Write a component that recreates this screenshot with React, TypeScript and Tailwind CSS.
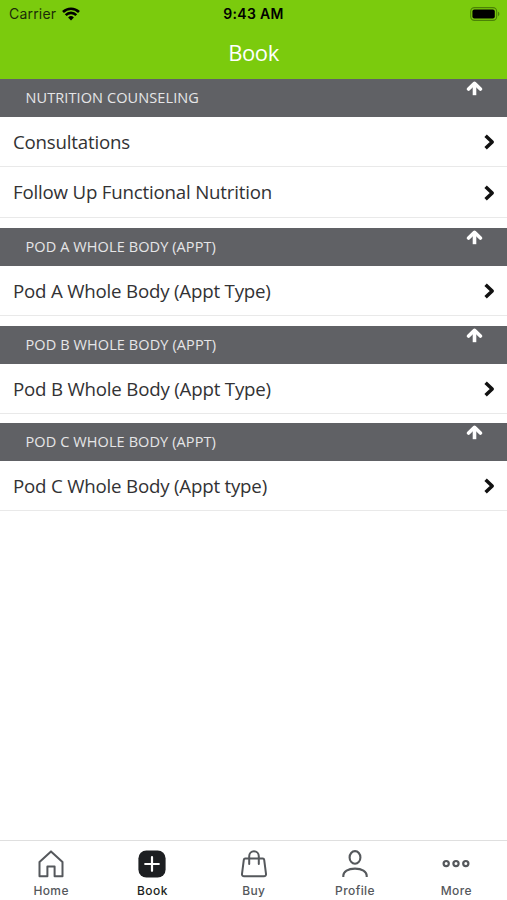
import React, { useState } from 'react';

interface Section {
  id: string;
  title: string;
  items: string[];
}

const SECTIONS: Section[] = [
  { id: 'nutrition', title: 'NUTRITION COUNSELING', items: ['Consultations', 'Follow Up Functional Nutrition'] },
  { id: 'pod-a', title: 'POD A WHOLE BODY (APPT)', items: ['Pod A Whole Body (Appt Type)'] },
  { id: 'pod-b', title: 'POD B WHOLE BODY (APPT)', items: ['Pod B Whole Body (Appt Type)'] },
  { id: 'pod-c', title: 'POD C WHOLE BODY (APPT)', items: ['Pod C Whole Body (Appt type)'] },
];

const HomeIcon = () => (
  <svg width="28" height="28" viewBox="0 0 28 28" fill="none" stroke="currentColor" strokeWidth="2" strokeLinejoin="round">
    <path d="M2.5 12 14 1.4 25.5 12v14.2H17.6v-9.6h-7.2v9.6H2.5z" />
  </svg>
);

const BookIcon = () => (
  <svg width="28" height="28" viewBox="0 0 28 28" fill="none">
    <rect x="0.4" y="0.4" width="27.2" height="27.2" rx="8" fill="#1d1f22" />
    <path d="M14 7.2v13.6M7.2 14h13.6" stroke="#fff" strokeWidth="2.2" strokeLinecap="round" />
  </svg>
);

const BuyIcon = () => (
  <svg width="28" height="28" viewBox="0 0 28 28" fill="none" stroke="currentColor" strokeWidth="2" strokeLinecap="round" strokeLinejoin="round">
    <path d="M5.2 8.6h17.6c.8 0 1.3.5 1.4 1.2l1.8 14c.2 1.4-.7 2.5-2.1 2.5H4.1c-1.4 0-2.3-1.1-2.1-2.5l1.8-14c.1-.7.6-1.2 1.4-1.2z" />
    <path d="M9.2 14V6.3a4.8 5 0 0 1 9.6 0V14" />
  </svg>
);

const ProfileIcon = () => (
  <svg width="28" height="28" viewBox="0 0 28 28" fill="none" stroke="currentColor" strokeWidth="2.1">
    <ellipse cx="14" cy="7.4" rx="5.4" ry="6.3" />
    <path d="M2.3 27v-1.2C2.3 21.4 7 18.6 14 18.6s11.7 2.8 11.7 7.2V27" />
  </svg>
);

const MoreIcon = () => (
  <svg width="28" height="28" viewBox="0 0 28 28" fill="none" stroke="currentColor" strokeWidth="2.2">
    <circle cx="4.2" cy="13.6" r="2.6" />
    <circle cx="14" cy="13.6" r="2.6" />
    <circle cx="23.8" cy="13.6" r="2.6" />
  </svg>
);

const TABS = [
  { label: 'Home', icon: HomeIcon },
  { label: 'Book', icon: BookIcon },
  { label: 'Buy', icon: BuyIcon },
  { label: 'Profile', icon: ProfileIcon },
  { label: 'More', icon: MoreIcon },
];

const StatusBar = () => (
  <div className="grid h-[27px] grid-cols-3 items-center pl-[9px] pr-[7px] font-['Inter',sans-serif] text-[14px] text-black">
    <div className="flex items-center gap-[6px]">
      <span className="text-[#1b2b08] tracking-[0.2px]">Carrier</span>
      <svg width="18" height="14" viewBox="0 0 18 14">
        <path d="M9 13.4 6.1 10.5a4.1 4.1 0 0 1 5.8 0z" fill="#000" />
        <path d="M3.7 8.1a7.5 7.5 0 0 1 10.6 0M1 5a11.4 11.4 0 0 1 16 0" fill="none" stroke="#000" strokeWidth="2.6" />
      </svg>
    </div>
    <span className="-ml-[2px] text-center font-semibold tracking-[0.35px]">9:43 AM</span>
    <svg className="justify-self-end" width="30" height="14" viewBox="0 0 30 14">
      <rect x="0.7" y="0.6" width="26" height="12.8" rx="3.8" fill="none" stroke="#4b8207" strokeWidth="1.1" />
      <rect x="2.4" y="2.4" width="22.4" height="9.2" rx="2" fill="#000" />
      <path d="M28 4.8c1.8.6 1.8 3.8 0 4.4z" fill="#4b8207" />
    </svg>
  </div>
);

const App: React.FC = () => {
  const [activeTab, setActiveTab] = useState('Book');

  return (
    <div className="flex h-[900px] w-full flex-col overflow-hidden bg-white font-['Open_Sans',sans-serif]">
      <header className="h-[79px] shrink-0 bg-[#7bcb0d]">
        <StatusBar />
        <h1 className="text-center text-[22px] leading-[50px] tracking-[-0.4px] text-white">Book</h1>
      </header>

      <main className="flex flex-1 flex-col gap-[9.8px]">
        {SECTIONS.map(section => (
          <section key={section.id}>
            <div className="flex h-[38px] items-start justify-between bg-[#606165] pl-[25.5px] pr-6 text-[#e6e6e8]">
              <h2 className="text-[14.5px] leading-[38px] tracking-[0.1px]">{section.title}</h2>
              <svg className="mt-[2px]" width="17" height="15" viewBox="0 0 17 15" fill="none" stroke="#fff" strokeWidth="3.6">
                <path d="M8.5 14.2V2.5" />
                <path d="M2.6 8 8.5 2.3 14.4 8" strokeLinecap="round" strokeLinejoin="round" />
              </svg>
            </div>
            <ul>
              {section.items.map(item => (
                <li key={item} className="flex h-[50px] items-center justify-between border-b border-[#e9e9e9] pl-[13px] pr-3 pt-px text-[18.7px] tracking-[-0.2px] text-[#323234] [&+li]:h-[51px]">
                  <span>{item}</span>
                  <svg width="11" height="16" viewBox="0 0 11 16" fill="none" stroke="#111" strokeWidth="3.5" strokeLinejoin="round">
                    <path d="M1.6 1.7 8.2 8l-6.6 6.3" />
                  </svg>
                </li>
              ))}
            </ul>
          </section>
        ))}
      </main>

      <nav className="grid h-[60px] shrink-0 grid-cols-5 border-t border-[#dfdfdf] pl-[0.5px] font-['Inter',sans-serif]">
        {TABS.map(({ label, icon: Icon }) => (
          <button
            key={label}
            onClick={() => setActiveTab(label)}
            className={`flex flex-col items-center pt-[9px] text-[12px] font-medium tracking-[0.4px] ${activeTab === label ? 'text-[#1d1f22]' : 'text-[#55585c]'}`}
          >
            <Icon />
            <span className="mt-[4px] leading-[18px]">{label}</span>
          </button>
        ))}
      </nav>
    </div>
  );
};

export default App;
